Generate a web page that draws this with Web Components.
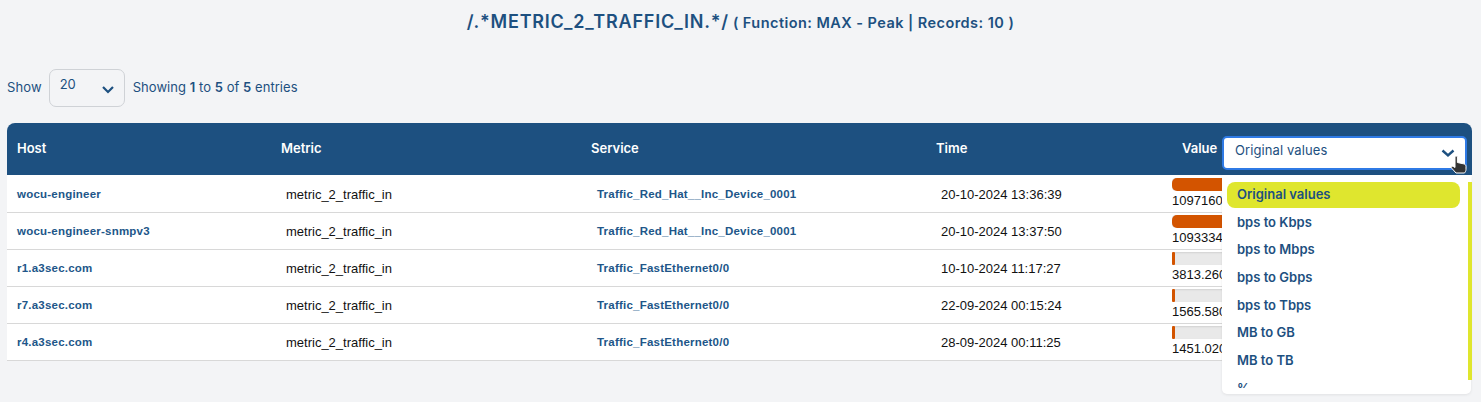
<!DOCTYPE html>
<html>
<head>
<meta charset="utf-8">
<title>Metric table</title>
<style>
	html, body { margin: 0; padding: 0; background: #f3f4f6; }
	body { width: 1481px; height: 402px; overflow: hidden; font-family: "Inter", "Noto Sans", sans-serif; }
</style>
</head>
<body>
<page-title main="/.*METRIC_2_TRAFFIC_IN.*/" sub="( Function: MAX - Peak | Records: 10 )"></page-title>
<table-info></table-info>
<data-table></data-table>

<script>
class PageTitle extends HTMLElement {
	connectedCallback() {
		this.attachShadow({ mode: 'open' });
		this.shadowRoot.innerHTML = `
		<style>
			:host { display: block; height: 45px; padding-top: 10px; box-sizing: border-box; text-align: center; color: #1d5080; font-weight: 600; line-height: 24px; }
			.m { font-size: 18px; letter-spacing: .78px; }
			.s { font-size: 14.5px; letter-spacing: .45px; margin-left: 4px; }
		</style>
		<span class="m">${this.getAttribute('main')}</span><span class="s">${this.getAttribute('sub')}</span>`;
	}
}
customElements.define('page-title', PageTitle);

class TableInfo extends HTMLElement {
	connectedCallback() {
		this.attachShadow({ mode: 'open' });
		this.shadowRoot.innerHTML = `
		<style>
			:host { display: flex; align-items: center; height: 38px; margin-top: 24px; padding-left: 7px; color: #1d5080; font-size: 13px; }
			.box { width: 76px; height: 38px; box-sizing: border-box; margin: 0 8px 0 7px; border: 1px solid #cfd2d6; border-radius: 7px; display: flex; justify-content: space-between; padding: 6px 9px 0 10px; }
			svg { margin-top: 9px; }
			b { font-weight: 600; }
			.t { letter-spacing: .05px; margin-top: -2px; }
			.l { margin-top: -2px; letter-spacing: .1px; }
		</style>
		<span class="l">Show</span>
		<div class="box"><span>20</span><svg width="14" height="9" viewBox="0 0 14 9"><path d="M2 2l5 5 5-5" fill="none" stroke="#1d5080" stroke-width="2.2"/></svg></div>
		<span class="t">Showing <b>1</b> to <b>5</b> of <b>5</b> entries</span>`;
	}
}
customElements.define('table-info', TableInfo);

class DataRow extends HTMLElement {
	connectedCallback() {
		let pct = this.getAttribute('pct');
		this.attachShadow({ mode: 'open' });
		this.shadowRoot.innerHTML = `
		<style>
			:host { display: grid; grid-template-columns: 264px 310px 345px 236px 310px; height: 37px; box-sizing: border-box; border-bottom: 1px solid #d8d8d8; background: #fff; font-family: "Liberation Sans", Arial, sans-serif; font-size: 13px; color: #111; align-items: center; }
			.link { color: #215689; font-weight: 700; font-size: 11.5px; letter-spacing: .22px; }
			.host { padding-left: 10px; }
			.c { padding-left: 15px; }
			.svc { padding-left: 16px; }
			.val { padding-left: 10px; align-self: start; padding-top: 2px; }
			.bar { height: 13px; background: #e9e9e9; border-radius: 4px; width: 120px; box-shadow: inset 0 1px 2px rgba(0,0,0,.1); }
			.bar i { display: block; height: 100%; width: ${pct}; background: #d35400; border-radius: ${pct == '100%' ? '5px' : '1px'}; }
			.n { line-height: 16px; margin-top: 2px; }
		</style>
		<div class="host link">${this.getAttribute('host')}</div>
		<div class="c">metric_2_traffic_in</div>
		<div class="svc link">${this.getAttribute('service')}</div>
		<div class="c">${this.getAttribute('time')}</div>
		<div class="val"><div class="bar"><i></i></div><div class="n">${this.getAttribute('value')}</div></div>`;
	}
}
customElements.define('data-row', DataRow);

class ValueSelect extends HTMLElement {
	connectedCallback() {
		let opts = ['Original values', 'bps to Kbps', 'bps to Mbps', 'bps to Gbps', 'bps to Tbps', 'MB to GB', 'MB to TB', '%'];
		this.attachShadow({ mode: 'open' });
		this.shadowRoot.innerHTML = `
		<style>
			:host { display: block; position: absolute; left: 1215px; top: 13px; width: 249px; font-size: 13px; color: #1d5080; font-weight: 400; }
			.sel { width: 245px; height: 34px; box-sizing: border-box; background: #fff; border: 2px solid #2f7ae5; border-radius: 5px; padding: 2px 0 0 11px; line-height: 20px; letter-spacing: .1px; position: relative; }
			.sel svg { position: absolute; right: 10px; top: 11px; }
			.menu { position: absolute; left: 0; top: 39px; width: 249px; height: 219px; background: #fff; border-radius: 0 0 5px 5px; box-shadow: 0 1px 3px rgba(0,0,0,.08); }
			.list { position: absolute; left: 5px; top: 7px; width: 233px; height: 206px; overflow: hidden; font-weight: 600; font-size: 13px; }
			.o { height: 26px; line-height: 25px; padding-left: 10px; margin-bottom: 1.7px; border-radius: 8px; }
			.o.on { background: #dfe62e; }
			.track { position: absolute; left: 246px; top: 7px; width: 4px; height: 198px; background: #dfe62e; }
			.hand { position: absolute; left: 228px; top: 19px; }
		</style>
		<div class="sel">Original values<svg width="14" height="9" viewBox="0 0 14 9"><path d="M1.5 1.5l5.5 5 5.5-5" fill="none" stroke="#1d5080" stroke-width="2.4"/></svg></div>
		<div class="menu">
			<div class="list">${opts.map((o, i) => `<div class="o ${i == 0 ? 'on' : ''}">${o}</div>`).join('')}</div>
			<div class="track"></div>
		</div>
		<svg class="hand" width="18" height="19" viewBox="0 0 18 19"><path d="M5 2c0-1.3 2.4-1.3 2.4 0v5.5l6 1.3c1.5.3 2.6 1.2 2.6 2.7v3c0 1.5-.8 2.5-1.5 3.5H6L1.5 13c-.8-1 .2-2.2 1.500-1.700L5 12.500z" fill="#333" stroke="#fff" stroke-width="1"/></svg>`;
	}
}
customElements.define('value-select', ValueSelect);

class DataTable extends HTMLElement {
	connectedCallback() {
		let rows = [
			['wocu-engineer', 'Traffic_Red_Hat__Inc_Device_0001', '20-10-2024 13:36:39', '1097160', '100%'],
			['wocu-engineer-snmpv3', 'Traffic_Red_Hat__Inc_Device_0001', '20-10-2024 13:37:50', '1093334', '100%'],
			['r1.a3sec.com', 'Traffic_FastEthernet0/0', '10-10-2024 11:17:27', '3813.260', '3px'],
			['r7.a3sec.com', 'Traffic_FastEthernet0/0', '22-09-2024 00:15:24', '1565.580', '3px'],
			['r4.a3sec.com', 'Traffic_FastEthernet0/0', '28-09-2024 00:11:25', '1451.020', '3px']
		];
		this.attachShadow({ mode: 'open' });
		this.shadowRoot.innerHTML = `
		<style>
			:host { display: block; position: relative; margin: 16px 0 0 7px; width: 1465px; }
			.head { display: grid; grid-template-columns: 264px 310px 345px 235px 311px; height: 53px; box-sizing: border-box; border-bottom: 1px solid #fff; padding-bottom: 3px; align-items: center; background: #1d5080; color: #fff; font-size: 13px; font-weight: 600; border-radius: 8px 8px 0 0; }
			.head div { padding-left: 10px; }
			.head .v { padding-left: 21px; }
		</style>
		<div class="head"><div>Host</div><div>Metric</div><div>Service</div><div>Time</div><div class="v">Value</div></div>
		${rows.map(r => `<data-row host="${r[0]}" service="${r[1]}" time="${r[2]}" value="${r[3]}" pct="${r[4]}"></data-row>`).join('')}
		<value-select></value-select>`;
	}
}
customElements.define('data-table', DataTable);
</script>
</body>
</html>
